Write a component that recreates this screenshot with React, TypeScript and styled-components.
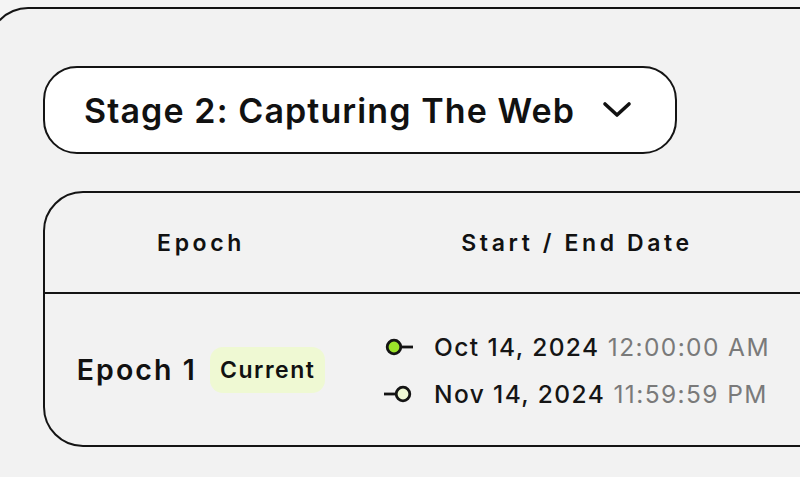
import React from "react";
import styled, { createGlobalStyle } from "styled-components";

const Global = createGlobalStyle`
  html, body { margin: 0; padding: 0; overflow: hidden; background: #f4f4f4; }
  body { width: 800px; height: 477px; font-family: "Inter", "Open Sans", sans-serif; color: #111; }
`;

const Page = styled.div`
  padding-top: 7px;
  margin-left: -12px;
  width: 900px;
`;

const OuterCard = styled.div`
  border: 2px solid #141414;
  border-right: none;
  border-radius: 40px 0 0 0;
  background: #f2f2f2;
  height: 520px;
  padding: 57px 0 0 53px;
  box-sizing: border-box;
  display: flex;
  flex-direction: column;
  align-items: flex-start;
  gap: 37px;
`;

const StageButton = styled.button`
  display: inline-flex;
  align-items: center;
  gap: 26px;
  height: 88px;
  width: 634px;
  box-sizing: border-box;
  padding: 0 0 0 39px;
  border: 2px solid #141414;
  border-radius: 34px;
  background: #ffffff;
  font-family: "Inter", sans-serif;
  font-weight: 600;
  font-size: 34px;
  letter-spacing: 1.1px;
  color: #111;
  cursor: pointer;
`;

const TableCard = styled.div`
  width: 820px;
  border: 2px solid #141414;
  border-radius: 40px 0 0 40px;
  background: #f2f2f2;
  display: grid;
  grid-template-columns: 312px 440px 1fr;
`;

const HeadCell = styled.div`
  height: 99px;
  display: flex;
  align-items: center;
  justify-content: center;
  border-bottom: 2px solid #141414;
  font-weight: 600;
  font-size: 23px;
  letter-spacing: 3.6px;
  color: #111;
`;

const BodyCell = styled.div`
  height: 151px;
  display: flex;
  align-items: center;
  justify-content: center;
`;

const EpochName = styled.span`
  font-weight: 600;
  font-size: 28.5px;
  letter-spacing: 2.1px;
  margin-right: 13px;
`;

const Badge = styled.span`
  display: inline-flex;
  align-items: center;
  height: 46px;
  padding: 0 10px;
  border-radius: 13px;
  background: #eff9d3;
  font-weight: 600;
  font-size: 23px;
  letter-spacing: 1.5px;
  color: #111;
`;

const DateList = styled.div`
  display: flex;
  flex-direction: column;
  gap: 17px;
  margin-top: 2px;
`;

const DateRow = styled.div`
  display: flex;
  align-items: center;
  gap: 18px;
  font-size: 24.5px;
  letter-spacing: 1.4px;
  line-height: 30px;
`;

const DateMain = styled.span`
  color: #151515;
  font-weight: 500;
`;

const TimePart = styled.span`
  color: #7a7a7a;
  font-weight: 400;
`;

const Marker = ({ kind }: { kind: "start" | "end" }) =>
  kind === "start" ? (
    <svg width="32" height="20" viewBox="0 0 32 20">
      <circle cx="10" cy="10" r="6.8" fill="#9be22a" stroke="#141414" strokeWidth="2.8" />
      <line x1="17" y1="10" x2="29" y2="10" stroke="#141414" strokeWidth="2.8" />
    </svg>
  ) : (
    <svg width="32" height="20" viewBox="0 0 32 20">
      <line x1="0" y1="10" x2="12" y2="10" stroke="#141414" strokeWidth="2.8" />
      <circle cx="19" cy="10" r="6.8" fill="#eef8d4" stroke="#141414" strokeWidth="2.8" />
    </svg>
  );

const Chevron = () => (
  <svg width="32" height="20" viewBox="0 0 32 20">
    <path d="M4 4 L16 15 L28 4" fill="none" stroke="#111" strokeWidth="3.6" strokeLinecap="round" strokeLinejoin="round" />
  </svg>
);

export default function App() {
  return (
    <>
      <Global />
      <Page>
        <OuterCard>
          <StageButton>
            <span>Stage 2: Capturing The Web</span>
            <Chevron />
          </StageButton>
          <TableCard>
            <HeadCell>Epoch</HeadCell>
            <HeadCell>Start / End Date</HeadCell>
            <HeadCell />
            <BodyCell>
              <EpochName>Epoch 1</EpochName>
              <Badge>Current</Badge>
            </BodyCell>
            <BodyCell>
              <DateList>
                <DateRow>
                  <Marker kind="start" />
                  <span>
                    <DateMain>Oct 14, 2024</DateMain> <TimePart>12:00:00 AM</TimePart>
                  </span>
                </DateRow>
                <DateRow>
                  <Marker kind="end" />
                  <span>
                    <DateMain>Nov 14, 2024</DateMain> <TimePart>11:59:59 PM</TimePart>
                  </span>
                </DateRow>
              </DateList>
            </BodyCell>
            <BodyCell />
          </TableCard>
        </OuterCard>
      </Page>
    </>
  );
}
